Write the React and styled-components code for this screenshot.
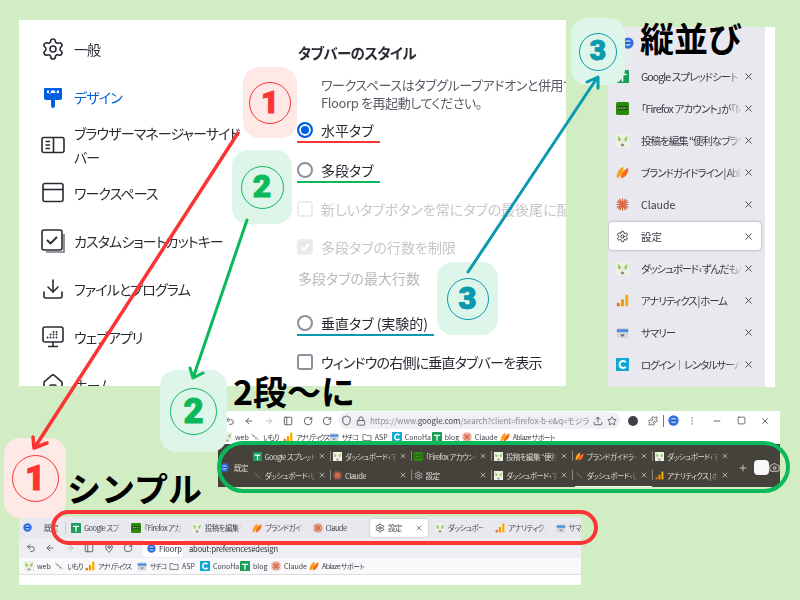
import React from 'react';
import styled, { createGlobalStyle } from 'styled-components';
import {
  Settings, Download, House, Undo2, ArrowLeft, ArrowRight, RotateCw, Shield, Lock, Upload, Star,
  Puzzle, EllipsisVertical, Minus, Square, X, Plus, Camera, PanelLeft, MapPin,
} from 'lucide-react';

const JP = `"Noto Sans CJK JP", "Noto Sans", sans-serif`;

const GlobalStyle = createGlobalStyle`
  html, body { margin: 0; padding: 0; background: #d2edc4; }
  * { box-sizing: border-box; }
  body { font-family: ${JP}; font-feature-settings: "palt"; }
`;

const Canvas = styled.div`
  position: relative;
  width: 800px;
  height: 600px;
  overflow: hidden;
  background: #d2edc4;
`;

/* screenshots pasted on the poster: their place is the content */
const Shot = styled.div`
  position: absolute;
  left: ${(p) => p.$x}px;
  top: ${(p) => p.$y}px;
  width: ${(p) => p.$w}px;
  height: ${(p) => p.$h}px;
  overflow: hidden;
  background: ${(p) => p.$bg || '#fff'};
  filter: blur(${(p) => p.$blur || 0}px);
`;

/* ---------- settings page ---------- */
const SettingsLayout = styled.div`
  display: grid;
  grid-template-columns: 278px 1fr;
  height: 100%;
`;
const Sidebar = styled.div`
  display: flex;
  flex-direction: column;
  padding: 5px 0 0 22px;
`;
const SideItem = styled.div`
  display: flex;
  align-items: center;
  gap: 9px;
  flex: 0 0 48px;
  color: ${(p) => (p.$active ? '#0060df' : '#2b2a33')};
  font-size: 14px;
  letter-spacing: -0.9px;
  line-height: 24px;
  svg { flex: 0 0 24px; }
`;
const SideLabel = styled.span`
  width: 172px;
`;
const Prefs = styled.div`
  display: flex;
  flex-direction: column;
  padding-top: 22px;
  color: #2b2a33;
  white-space: nowrap;
  overflow: hidden;
`;
const PrefTitle = styled.div`
  font-size: 14.5px;
  font-weight: 700;
  letter-spacing: -0.6px;
  line-height: 22px;
  padding-left: 1px;
`;
const PrefDesc = styled.div`
  margin-top: 12px;
  padding-left: 24px;
  font-size: 13px;
  letter-spacing: -0.4px;
  line-height: 18px;
  color: #5b5b66;
`;
const PrefRow = styled.div`
  display: flex;
  align-items: center;
  gap: 8px;
  height: 24px;
  margin-top: ${(p) => p.$top}px;
  font-size: 14px;
  letter-spacing: ${(p) => p.$ls || 0}px;
  width: ${(p) => (p.$line ? `${p.$lineW}px` : 'auto')};
  border-bottom: ${(p) => (p.$line ? `2px solid ${p.$line}` : '0')};
  color: ${(p) => (p.$off ? '#c6c6cb' : '#2b2a33')};
`;
const PrefNote = styled.div`
  height: 24px;
  margin-top: 7px;
  padding-left: 1px;
  font-size: 14px;
  line-height: 24px;
  color: #b9b9be;
`;
const Radio = styled.span`
  flex: 0 0 16px;
  height: 16px;
  border-radius: 50%;
  border: 2px solid ${(p) => (p.$on ? '#0060df' : '#8f8f9d')};
  background: ${(p) => (p.$on ? '#0060df' : '#fff')};
  box-shadow: ${(p) => (p.$on ? 'inset 0 0 0 2px #fff' : 'none')};
`;
const Check = styled.span`
  flex: 0 0 16px;
  height: 16px;
  border-radius: 3px;
  display: flex;
  align-items: center;
  justify-content: center;
  border: 2px solid ${(p) => (p.$off ? '#ececef' : '#8f8f9d')};
  background: ${(p) => (p.$on ? '#e8e8ec' : '#fff')};
`;

/* ---------- favicons ---------- */
const Floorp = ({ size = 10 }) => (
  <svg width={size} height={size} viewBox="0 0 16 16" style={{ flex: `0 0 ${size}px` }}>
    <circle cx="8" cy="8" r="7.5" fill="#2f6fe4" />
    <circle cx="8" cy="8" r="4" fill="#9cc2f7" />
    <path d="M4 8h8" stroke="#1d3fb8" strokeWidth="2" />
  </svg>
);

const Fav = ({ kind, size = 12 }) => {
  const box = { width: size, height: size, viewBox: '0 0 16 16', style: { flex: `0 0 ${size}px` } };
  switch (kind) {
    case 'sheet':
      return (
        <svg {...box}>
          <rect width="16" height="16" rx="1" fill="#1b9e5a" />
          <path d="M3 5.5h10M8 5.5V14" stroke="#fff" strokeWidth="2" />
        </svg>
      );
    case 'fx':
      return (
        <svg {...box}>
          <rect width="16" height="16" rx="2" fill="#2c8a0b" />
          <rect x="2" y="5" width="12" height="5" fill="#1f4d0e" />
          <path d="M3 7.5h10" stroke="#9fd37e" strokeWidth="1.6" strokeDasharray="2 1" />
        </svg>
      );
    case 'zunda':
      return (
        <svg {...box}>
          <rect width="16" height="16" fill="#edf3e4" />
          <path d="M2 2l4 4h4l4-4-1 7H3z" fill="#86c45e" />
          <circle cx="8" cy="8.5" r="3" fill="#f6e7da" />
          <path d="M6 12h4v3H6z" fill="#8d8f8b" />
        </svg>
      );
    case 'leaf':
      return (
        <svg {...box}>
          <path d="M1 15C0 9 4 3 9 1c1 6-2 12-8 14z" fill="#f9a11b" />
          <path d="M6 15c0-5 3-10 9-13 1 6-3 12-9 13z" fill="#f56b16" />
        </svg>
      );
    case 'claude':
      return (
        <svg {...box}>
          <g stroke="#d9694a" strokeWidth="1.5" strokeLinecap="round">
            <path d="M8 1v14M1 8h14M3 3l10 10M13 3L3 13M4.8 1.5l6.4 13M11.2 1.5l-6.4 13M1.5 4.8l13 6.4M14.5 4.8l-13 6.4" />
          </g>
        </svg>
      );
    case 'gear':
      return <Settings size={size} strokeWidth={1.8} color="#2b2a33" style={{ flex: `0 0 ${size}px` }} />;
    case 'gearlight':
      return <Settings size={size} strokeWidth={1.8} color="#d8d8d8" style={{ flex: `0 0 ${size}px` }} />;
    case 'bars':
      return (
        <svg {...box}>
          <rect x="1" y="11" width="3.6" height="4" fill="#e8710a" />
          <rect x="6.2" y="6.5" width="3.6" height="8.5" fill="#f29900" />
          <rect x="11.4" y="1" width="3.6" height="14" fill="#f9ab00" />
        </svg>
      );
    case 'summary':
      return (
        <svg {...box}>
          <rect x="1" y="2" width="14" height="13" rx="2" fill="#d5d6dc" />
          <rect x="1" y="4" width="14" height="3.5" fill="#4a8be0" />
          <path d="M6 10l2 2.5L10 10" stroke="#5a5a66" strokeWidth="1.4" fill="none" />
        </svg>
      );
    case 'conoha':
      return (
        <svg {...box}>
          <rect width="16" height="16" fill="#11a9d6" />
          <path d="M12 5a4.4 4.4 0 1 0 0 6" stroke="#fff" strokeWidth="2.4" fill="none" />
        </svg>
      );
    case 'imori':
      return (
        <svg {...box}>
          <path d="M2 3l6 5 6 5M6 5l-1 3M10 9l-1 3" stroke={'#7d7d78'} strokeWidth="1.3" fill="none" />
        </svg>
      );
    case 'folder':
      return (
        <svg {...box}>
          <path d="M1.5 4h4.5l1.5 1.8h7v7.7h-13z" fill="none" stroke="#5b5b66" strokeWidth="1.2" />
        </svg>
      );
    default:
      return <span />;
  }
};

/* ---------- vertical tabs ---------- */
const VerticalBar = styled.div`
  width: 157px;
  height: 100%;
  background: #e9e8ee;
  padding-top: 1px;
`;
const VerticalRow = styled.div`
  display: flex;
  align-items: center;
  min-width: 0;
  height: ${(p) => (p.$active ? 28 : 32)}px;
  margin: ${(p) => (p.$active ? '2px 4px 2px 1px' : '0 4px 0 1px')};
  padding: 0 7px;
  border-radius: 4px;
  background: ${(p) => (p.$active ? '#fff' : 'transparent')};
  box-shadow: ${(p) => (p.$active ? '0 0 3px rgba(0,0,0,.35)' : 'none')};
  font-size: 10.5px;
  color: #3a3944;
  svg.x { flex: 0 0 11px; margin-left: 1px; }
`;
const FadeTitle = styled.span`
  flex: 1;
  min-width: 0;
  margin-left: ${(p) => p.$gap}px;
  letter-spacing: ${(p) => p.$ls}px;
  white-space: nowrap;
  overflow: hidden;
  -webkit-mask-image: linear-gradient(to right, #000 85%, transparent);
  mask-image: linear-gradient(to right, #000 85%, transparent);
`;

/* ---------- compact browser chrome ---------- */
const Chrome = styled.div`
  display: flex;
  flex-direction: column;
  height: 100%;
`;
const NavRow = styled.div`
  display: flex;
  align-items: center;
  height: ${(p) => p.$h}px;
  flex: 0 0 auto;
  padding-left: ${(p) => p.$pad}px;
  background: ${(p) => p.$bg || '#fff'};
  color: #4a4a55;
`;
const NavIcon = styled.span`
  display: flex;
  justify-content: center;
  flex: 0 0 ${(p) => p.$w || 19.5}px;
`;
const UrlBar = styled.div`
  display: flex;
  align-items: center;
  gap: 4px;
  width: 281px;
  height: 17px;
  margin-left: 2px;
  padding: 0 0 0 2px;
  border-radius: 9px;
  background: #f0f0f4;
  font-size: 8px;
  letter-spacing: -0.1px;
  color: #8a8a94;
  white-space: nowrap;
  overflow: hidden;
  b { font-weight: 400; color: #3e3e48; }
`;
const UrlActions = styled.span`
  display: flex;
  align-items: center;
  gap: 4px;
  margin-left: auto;
  padding-right: 3px;
  color: #4a4a55;
`;
const VDivider = styled.span`
  width: 1px;
  height: 12px;
  background: #77777f;
  margin: 0 4px 0 3px;
`;
const Bookmarks = styled.div`
  display: flex;
  align-items: center;
  height: ${(p) => p.$h}px;
  padding-left: ${(p) => p.$pad}px;
  background: ${(p) => p.$bg || '#fff'};
  border-bottom: ${(p) => (p.$rule ? '1px solid #dedee2' : '0')};
  font-size: 7px;
  color: #3e3e48;
  white-space: nowrap;
`;
const Mark = styled.span`
  display: flex;
  align-items: center;
  gap: 3px;
  flex: 0 0 ${(p) => p.$w}px;
  letter-spacing: ${(p) => p.$ls}px;
`;

const DarkBar = styled.div`
  display: flex;
  align-items: center;
  flex: 1;
  background: #45413b;
  color: #dedbd4;
  font-size: 7.5px;
`;
const DarkDefault = styled.div`
  display: flex;
  align-items: center;
  gap: 5px;
  flex: 0 0 32.5px;
  margin-top: 4px;
  padding-left: 2px;
  letter-spacing: -0.5px;
  white-space: nowrap;
`;
const DarkGrid = styled.div`
  display: grid;
  grid-template-columns: repeat(6, 80.5px);
  grid-auto-rows: 19px;
`;
const DarkTab = styled.div`
  display: flex;
  align-items: center;
  min-width: 0;
  padding: 0 0 0 2px;
  position: relative;
  svg.x { flex: 0 0 8px; margin: 0 4px 0 2px; }
  &::after {
    content: '';
    flex: 0 0 1px;
    height: 10px;
    background: ${(p) => (p.$last ? 'transparent' : '#8b8882')};
  }
  &::before {
    content: '';
    display: ${(p) => (p.$active ? 'block' : 'none')};
    position: absolute;
    left: 2px;
    right: 1px;
    bottom: -3px;
    height: 2px;
    background: #f4f4f4;
  }
`;
const DarkActions = styled.div`
  display: flex;
  align-items: center;
  margin: 4px 0 0 4px;
  color: #dedbd4;
`;
const WhiteBox = styled.span`
  width: 15px;
  height: 15px;
  margin-left: 6px;
  border-radius: 4px;
  background: #f8f8f8;
`;

const TabStrip = styled.div`
  display: flex;
  align-items: center;
  height: 21px;
  flex: 0 0 auto;
  background: #e9e8ee;
  font-size: 7.5px;
  color: #4a4a55;
  white-space: nowrap;
`;
const StripDefault = styled.div`
  display: flex;
  align-items: center;
  gap: 12px;
  flex: 0 0 47px;
  height: 12px;
  padding-left: 4px;
  letter-spacing: -0.5px;
  border-right: 1px solid #cfcfd6;
`;
const StripTab = styled.div`
  display: flex;
  align-items: center;
  flex: 0 0 ${(p) => (p.$active ? 58 : 60.4)}px;
  min-width: 0;
  height: ${(p) => (p.$active ? 18 : 20)}px;
  padding: 0 5px;
  margin: ${(p) => (p.$active ? '0 2px' : '0')};
  border-radius: 3px;
  background: ${(p) => (p.$active ? '#fff' : 'transparent')};
  box-shadow: ${(p) => (p.$active ? '0 0 2px rgba(0,0,0,.25)' : 'none')};
`;
const Identity = styled.div`
  display: flex;
  align-items: center;
  gap: 3px;
  flex: 0 0 40px;
  height: 17px;
  padding-left: 4px;
  margin-left: 5px;
  border-radius: 3px;
  background: #fff;
  font-size: 7.5px;
  color: #2b2a33;
`;
const Address = styled.span`
  margin-left: 6px;
  font-size: 7.5px;
  letter-spacing: -0.1px;
  color: #2b2a33;
`;

/* ---------- annotations ---------- */
const Badge = styled.div`
  position: absolute;
  left: ${(p) => p.$x}px;
  top: ${(p) => p.$y}px;
  width: ${(p) => p.$w}px;
  height: ${(p) => p.$h}px;
  display: flex;
  align-items: center;
  justify-content: center;
  border-radius: 16px;
  background: ${(p) => p.$bg};
`;
const BadgeRing = styled.span`
  display: flex;
  align-items: center;
  justify-content: center;
  width: ${(p) => p.$d}px;
  height: ${(p) => p.$d}px;
  border-radius: 50%;
  border: 1.5px solid ${(p) => p.$color};
  color: ${(p) => p.$color};
  font-family: Roboto, "Noto Sans", sans-serif;
  font-size: ${(p) => p.$d * 0.74}px;
  font-weight: 900;
  -webkit-text-stroke: 1px ${(p) => p.$color};
  line-height: 1;
`;
const Callout = styled.div`
  position: absolute;
  left: ${(p) => p.$x}px;
  top: ${(p) => p.$y}px;
  color: #000;
  font-size: ${(p) => p.$size}px;
  font-weight: 700;
  line-height: 1;
  white-space: nowrap;
  font-feature-settings: normal;
`;
const Overlay = styled.svg`
  position: absolute;
  left: 0;
  top: 0;
  pointer-events: none;
`;

/* kind, title, letter spacing, active */
const verticalTabs = [
  ['sheet', 'Google スプレッドシート', -0.9],
  ['fx', '「Firefox アカウント」が「Mozilla', -0.8],
  ['zunda', '投稿を編集 “便利なブラウザ', -1],
  ['leaf', 'ブランドガイドライン | Ablaze', -1],
  ['claude', 'Claude', 0],
  ['gear', '設定', 0, true],
  ['zunda', 'ダッシュボード ‹ ずんだもんの', -1.2],
  ['bars', 'アナリティクス | ホーム', -1.2],
  ['summary', 'サマリー', -1],
  ['conoha', 'ログイン｜レンタルサーバーなら', -1.2],
];

const darkTabs = [
  ['sheet', 'Google スプレッドシート'],
  ['zunda', 'ダッシュボード ‹ ずんだもん'],
  ['fx', '「Firefox アカウント」が'],
  ['zunda', '投稿を編集 “便利なブラ'],
  ['leaf', 'ブランドガイドライン | Abl'],
  ['zunda', 'ダッシュボード ‹ ずんだもん'],
  ['imori', 'ダッシュボード ‹ いもり'],
  ['claude', 'Claude'],
  ['gearlight', '設定'],
  ['zunda', 'ダッシュボード ‹ ずんだもん'],
  ['imori', 'ダッシュボード ‹ いもり', false, true],
  ['bars', 'アナリティクス | ホーム'],
];

const stripTabs = [
  ['sheet', 'Google スプレッド'],
  ['fx', '「Firefox アカウント'],
  ['zunda', '投稿を編集 “便利'],
  ['leaf', 'ブランドガイドライン'],
  ['claude', 'Claude'],
  ['gear', '設定', true],
  ['zunda', 'ダッシュボード ‹'],
  ['bars', 'アナリティクス |'],
  ['summary', 'サマリー'],
];

/* kind, label, letter spacing, slot width in the two bookmark bars */
const marks = [
  ['zunda', 'web', 0, 28, 30],
  ['imori', 'いもり', -1.2, 33, 31],
  ['bars', 'アナリティクス', -1.4, 45, 52],
  ['summary', 'サチコ', -1.2, 33, 32],
  ['folder', 'ASP', 0, 30, 31],
  ['conoha', 'ConoHa', 0, 40, 40],
  ['sheet', 'blog', 0, 30, 31],
  ['claude', 'Claude', 0, 38, 38],
  ['leaf', 'Ablaze サポート', -0.6, 60, 60],
];

const BookmarkList = ({ h, pad, bg, rule, slot }) => (
  <Bookmarks $h={h} $pad={pad} $bg={bg} $rule={rule}>
    {marks.map((mark) => (
      <Mark key={mark[1]} $ls={mark[2]} $w={mark[slot]}>
        <Fav kind={mark[0]} size={10} />
        {mark[1]}
      </Mark>
    ))}
  </Bookmarks>
);

const TwoRowBrowser = () => (
  <Chrome>
    <NavRow $h={19} $pad={2}>
      <NavIcon><Undo2 size={10} /></NavIcon>
      <NavIcon><ArrowLeft size={10} /></NavIcon>
      <NavIcon><ArrowRight size={10} color="#b6b6bd" /></NavIcon>
      <NavIcon><PanelLeft size={10} /></NavIcon>
      <NavIcon><RotateCw size={10} /></NavIcon>
      <NavIcon><RotateCw size={10} /></NavIcon>
      <UrlBar>
        <Shield size={11} color="#4a4a55" style={{ flex: '0 0 11px' }} />
        <Lock size={10} color="#4a4a55" style={{ flex: '0 0 10px' }} />
        <span>https://www.<b>google.com</b>/search?client=firefox-b-e&amp;q=モジラ</span>
        <UrlActions>
          <Upload size={10} />
          <Star size={10} />
        </UrlActions>
      </UrlBar>
      <NavIcon $w={26}><svg width="10" height="10" viewBox="0 0 16 16"><circle cx="8" cy="8" r="8" fill="#3f3f46" /></svg></NavIcon>
      <NavIcon $w={14}><Puzzle size={10} /></NavIcon>
      <VDivider />
      <Floorp size={11} />
      <NavIcon $w={26}><EllipsisVertical size={10} color="#9a9aa3" /></NavIcon>
      <NavIcon $w={24}><Minus size={10} /></NavIcon>
      <NavIcon $w={24}><Square size={9} /></NavIcon>
      <NavIcon $w={24}><X size={10} /></NavIcon>
    </NavRow>
    <BookmarkList h={14} pad={4} slot={3} />
    <DarkBar>
      <DarkDefault>
        <Floorp size={9} />
        既定
      </DarkDefault>
      <DarkGrid>
        {darkTabs.map(([kind, title, , active], i) => (
          <DarkTab key={`dark-tab-${i}`} $last={i % 6 === 5} $active={active}>
            <Fav kind={kind} size={9} />
            <FadeTitle $gap={3} $ls={-0.6}>{title}</FadeTitle>
            <X className="x" size={8} />
          </DarkTab>
        ))}
      </DarkGrid>
      <DarkActions>
        <Plus size={10} />
        <WhiteBox />
        <Camera size={11} />
      </DarkActions>
    </DarkBar>
  </Chrome>
);

const SimpleBrowser = () => (
  <Chrome>
    <TabStrip>
      <StripDefault>
        <Floorp size={9} />
        既定
      </StripDefault>
      {stripTabs.map(([kind, title, active], i) => (
        <StripTab key={`strip-tab-${i}`} $active={active}>
          <Fav kind={kind} size={10} />
          <FadeTitle $gap={3} $ls={-0.6}>{title}</FadeTitle>
          {active && <X size={8} />}
        </StripTab>
      ))}
    </TabStrip>
    <NavRow $h={20} $pad={2} $bg="#efeff3">
      <NavIcon><Undo2 size={10} /></NavIcon>
      <NavIcon><ArrowLeft size={10} /></NavIcon>
      <NavIcon><ArrowRight size={10} color="#b6b6bd" /></NavIcon>
      <NavIcon><PanelLeft size={10} /></NavIcon>
      <NavIcon><MapPin size={10} /></NavIcon>
      <NavIcon><RotateCw size={10} /></NavIcon>
      <Identity>
        <Floorp size={9} />
        Floorp
      </Identity>
      <Address>about:preferences#design</Address>
    </NavRow>
    <BookmarkList h={17} pad={5} bg="#f9f9fb" rule slot={4} />
  </Chrome>
);

const Ring = ({ x, y, w, h, d, n, bg, color }) => (
  <Badge $x={x} $y={y} $w={w} $h={h} $bg={bg}>
    <BadgeRing $d={d} $color={color}>{n}</BadgeRing>
  </Badge>
);

const RED = '#fb3434';
const GREEN = '#0cb95a';
const TEAL = '#0a9ab0';
const PINK_BG = '#fee9e6';
const MINT_BG = '#def6ea';

export default function App() {
  return (
    <Canvas>
      <GlobalStyle />

      <Shot $x={19} $y={20} $w={547} $h={366} $blur={0.25}>
        <SettingsLayout>
          <Sidebar>
            <SideItem><Settings size={24} strokeWidth={1.6} /><SideLabel>一般</SideLabel></SideItem>
            <SideItem $active>
              <svg width="24" height="24" viewBox="0 0 24 24" fill="#0060df">
                <path d="M4 3h16a1 1 0 0 1 1 1v9a2 2 0 0 1-2 2h-5v6a2 2 0 0 1-4 0v-6H5a2 2 0 0 1-2-2V4a1 1 0 0 1 1-1z" />
                <path d="M6 5.5h2v3h2v-3h4v2h2v-2h2V8H6z" fill="#fff" />
              </svg>
              <SideLabel>デザイン</SideLabel>
            </SideItem>
            <SideItem>
              <svg width="24" height="24" viewBox="0 0 24 24" fill="none" stroke="#2b2a33" strokeWidth="1.6">
                <rect x="1" y="4.5" width="22" height="15" rx="2" />
                <path d="M12.5 4.5v15M4.5 8.5h4.5M4.5 12h4.5M4.5 15.5h4.5" />
              </svg>
              <SideLabel>ブラウザーマネージャーサイドバー</SideLabel>
            </SideItem>
            <SideItem>
              <svg width="24" height="24" viewBox="0 0 24 24" fill="none" stroke="#2b2a33" strokeWidth="1.6">
                <rect x="2" y="2.5" width="20" height="18" rx="2" />
                <path d="M2 8.5h20" />
              </svg>
              <SideLabel>ワークスペース</SideLabel>
            </SideItem>
            <SideItem>
              <svg width="24" height="24" viewBox="0 0 24 24" fill="none" stroke="#2b2a33" strokeWidth="1.6">
                <rect x="1" y="1" width="20" height="20" rx="2" />
                <path d="M6 11l3.5 3.5L16 8" strokeWidth="1.8" />
                <path d="M5 23h18V5" stroke="#77777f" />
              </svg>
              <SideLabel>カスタムショートカットキー</SideLabel>
            </SideItem>
            <SideItem><Download size={24} strokeWidth={1.6} /><SideLabel>ファイルとプログラム</SideLabel></SideItem>
            <SideItem>
              <svg width="24" height="24" viewBox="0 0 24 24" fill="none" stroke="#2b2a33" strokeWidth="1.6">
                <rect x="2" y="2" width="20" height="15" rx="2" />
                <path d="M12 17v4M7 21.5h10" />
                <path d="M6.5 12.5h.1M9.5 12.5h.1M12.5 12.5h.1M15.5 12.5h.1M12.5 7h.1M15.5 7h.1M9.5 9.5h.1M12.5 9.5h.1M15.5 9.5h.1" strokeWidth="1.8" strokeLinecap="round" />
              </svg>
              <SideLabel>ウェブアプリ</SideLabel>
            </SideItem>
            <SideItem><House size={24} strokeWidth={1.6} /><SideLabel>ホーム</SideLabel></SideItem>
          </Sidebar>
          <Prefs>
            <PrefTitle>タブバーのスタイル</PrefTitle>
            <PrefDesc>
              ワークスペースはタブグループアドオンと併用できません。<br />
              Floorp を再起動してください。
            </PrefDesc>
            <PrefRow $top={7} $line={RED} $lineW={83}><Radio $on />水平タブ</PrefRow>
            <PrefRow $top={16} $line={GREEN} $lineW={83}><Radio />多段タブ</PrefRow>
            <PrefRow $top={14} $off><Check $off />新しいタブボタンを常にタブの最後尾に配置する</PrefRow>
            <PrefRow $top={14} $off>
              <Check $off $on>
                <svg width="12" height="12" viewBox="0 0 12 12" fill="none" stroke="#fff" strokeWidth="2"><path d="M2 6l3 3 5-6" /></svg>
              </Check>
              多段タブの行数を制限
            </PrefRow>
            <PrefNote>多段タブの最大行数</PrefNote>
            <PrefRow $top={22} $line={TEAL} $lineW={137}><Radio />垂直タブ (実験的)</PrefRow>
            <PrefRow $top={14} $ls={-0.8}><Check />ウィンドウの右側に垂直タブバーを表示</PrefRow>
          </Prefs>
        </SettingsLayout>
      </Shot>

      <Shot $x={608} $y={27} $w={167} $h={360} $blur={0.35}>
        <VerticalBar>
          <VerticalRow>
            <span style={{ marginLeft: 6 }}><Floorp size={12} /></span>
          </VerticalRow>
          {verticalTabs.map(([kind, title, ls, active], i) => (
            <VerticalRow key={`v-tab-${i}`} $active={active}>
              <Fav kind={kind} size={13} />
              <FadeTitle $gap={12} $ls={ls}>{title}</FadeTitle>
              <X className="x" size={11} />
            </VerticalRow>
          ))}
        </VerticalBar>
      </Shot>

      <Shot $x={218} $y={411} $w={562} $h={76} $blur={0.35}>
        <TwoRowBrowser />
      </Shot>

      <Shot $x={19} $y={517} $w={562} $h={68} $blur={0.35}>
        <SimpleBrowser />
      </Shot>

      <Ring x={243} y={67} w={54} h={71} d={42} n="1" bg={PINK_BG} color={RED} />
      <Ring x={232} y={150} w={60} h={74} d={43} n="2" bg={MINT_BG} color={GREEN} />
      <Ring x={437} y={262} w={61} h={73} d={42} n="3" bg={MINT_BG} color={TEAL} />
      <Ring x={571} y={18} w={54} h={67} d={38} n="3" bg={MINT_BG} color={TEAL} />
      <Ring x={160} y={370} w={67} h={82} d={47} n="2" bg={MINT_BG} color={GREEN} />
      <Ring x={4} y={438} w={62} h={80} d={47} n="1" bg={PINK_BG} color={RED} />

      <Callout $x={640} $y={21} $size={34}>縦並び</Callout>
      <Callout $x={233} $y={374} $size={34}>2段〜に</Callout>
      <Callout $x={67} $y={471} $size={34}>シンプル</Callout>

      <Overlay width="800" height="600" fill="none" strokeLinecap="round" strokeLinejoin="round">
        <rect x="219" y="443" width="569" height="48" rx="24" stroke={GREEN} strokeWidth="4" />
        <rect x="53" y="512" width="543" height="31" rx="15.5" stroke={RED} strokeWidth="4" />
        <path d="M238 133L35 447M33 437l1 11 13-5" stroke={RED} strokeWidth="3.5" />
        <path d="M247 220L193 378M190 368l3 10 10-5" stroke={GREEN} strokeWidth="3" />
        <path d="M468 272L597 78M587 82l11-5v11" stroke={TEAL} strokeWidth="3" />
      </Overlay>
    </Canvas>
  );
}
